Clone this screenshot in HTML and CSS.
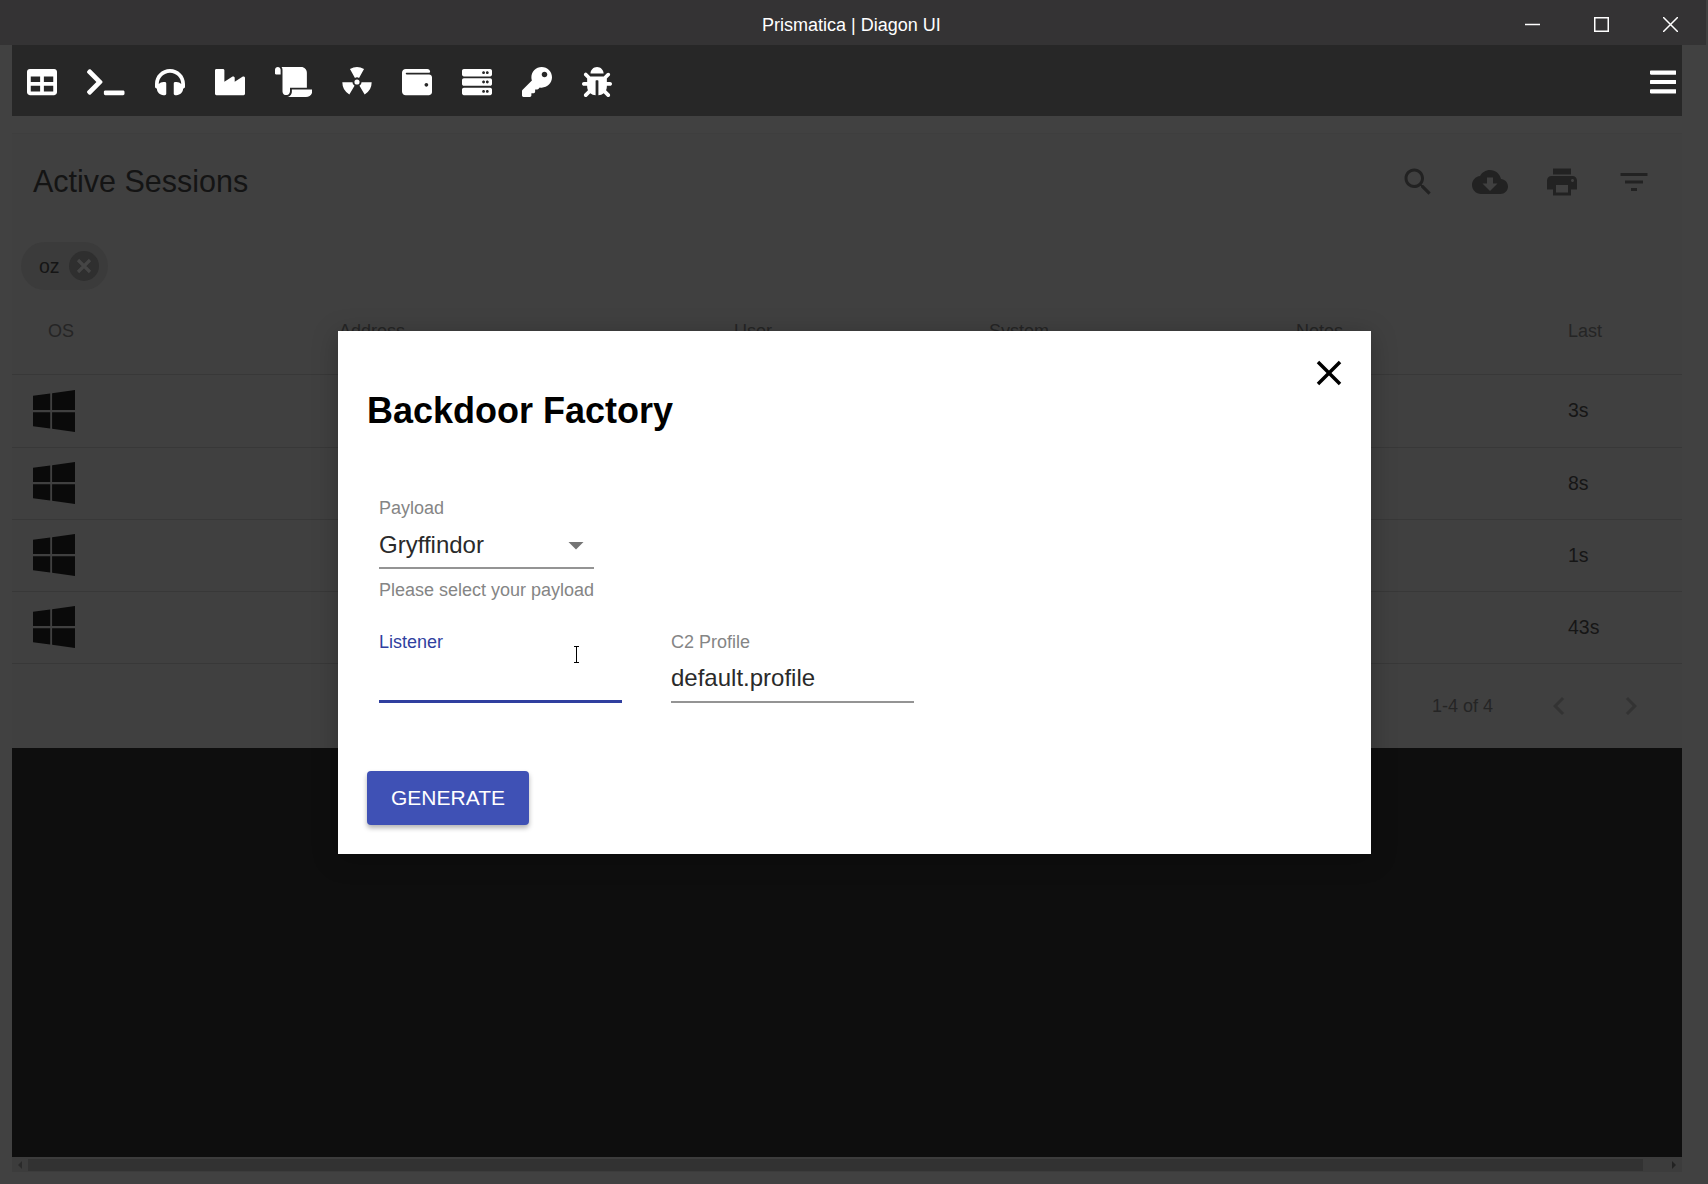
FILE: index.html
```html
<!DOCTYPE html>
<html lang="en">
<head>
<meta charset="utf-8">
<title>Prismatica | Diagon UI</title>
<link rel="stylesheet" href="styles.css">
</head>
<body>
<header class="titlebar">
  <div class="app-title">Prismatica | Diagon UI</div>
  <div class="win-controls">
    <div class="win-btn"><svg class="win-ic" viewBox="0 0 15 15"><path d="M0 7.5H15" /></svg></div>
    <div class="win-btn"><svg class="win-ic" viewBox="0 0 15 15"><rect x="0.75" y="0.75" width="13.5" height="13.5" /></svg></div>
    <div class="win-btn"><svg class="win-ic" viewBox="0 0 15 15"><path d="M0 0L15 15M15 0L0 15" /></svg></div>
  </div>
</header>

<div class="shell">
  <nav class="toolbar">
    <svg class="tb-ic" viewBox="0 0 512 512"><path d="M464 32H48C21.49 32 0 53.49 0 80v352c0 26.51 21.49 48 48 48h416c26.51 0 48-21.49 48-48V80c0-26.51-21.49-48-48-48zM224 416H64v-96h160v96zm0-160H64v-96h160v96zm224 160H288v-96h160v96zm0-160H288v-96h160v96z"/></svg>
    <svg class="tb-ic wide" viewBox="0 0 640 512"><path d="M257.981 272.971L63.638 467.314c-9.373 9.373-24.569 9.373-33.941 0L7.029 444.647c-9.357-9.357-9.375-24.522-.04-33.901L161.011 256 6.99 101.255c-9.335-9.379-9.317-24.544.04-33.901l22.667-22.667c9.373-9.373 24.569-9.373 33.941 0L257.981 239.03c9.373 9.372 9.373 24.568 0 33.941zM640 456v-32c0-13.255-10.745-24-24-24H312c-13.255 0-24 10.745-24 24v32c0 13.255 10.745 24 24 24h304c13.255 0 24-10.745 24-24z"/></svg>
    <svg class="tb-ic" viewBox="0 0 512 512"><path d="M256 32C114.52 32 0 146.496 0 288v48a32 32 0 0 0 17.689 28.622l14.383 7.191C34.083 431.903 83.421 480 144 480h24c13.255 0 24-10.745 24-24V280c0-13.255-10.745-24-24-24h-24c-31.342 0-59.671 12.879-80 33.627V288c0-105.869 86.131-192 192-192s192 86.131 192 192v1.627C427.671 268.879 399.342 256 368 256h-24c-13.255 0-24 10.745-24 24v176c0 13.255 10.745 24 24 24h24c60.579 0 109.917-48.098 111.928-108.187l14.382-7.191A32 32 0 0 0 512 336v-48c0-141.479-114.496-256-256-256z"/></svg>
    <svg class="tb-ic" viewBox="0 0 512 512"><path d="M475.115 163.781L336 252.309v-68.28c0-18.916-20.931-30.399-36.885-20.248L160 252.309V56c0-13.255-10.745-24-24-24H24C10.745 32 0 42.745 0 56v400c0 13.255 10.745 24 24 24h464c13.255 0 24-10.745 24-24V184.029c0-18.917-20.931-30.399-36.885-20.248z"/></svg>
    <svg class="tb-ic wide" viewBox="0 0 640 512"><path d="M48 0C21.53 0 0 21.53 0 48v64c0 8.84 7.16 16 16 16h80V48C96 21.53 74.47 0 48 0zm208 412.57V352h288V96c0-52.94-43.06-96-96-96H111.59C121.74 13.41 128 29.92 128 48v368c0 38.87 34.65 69.65 74.75 63.12C234.22 474 256 444.46 256 412.57zM288 384v32c0 52.94-43.06 96-96 96h336c61.86 0 112-50.14 112-112 0-8.84-7.16-16-16-16H288z"/></svg>
    <svg class="tb-ic" viewBox="0 0 512 512">
      <circle cx="256" cy="256" r="44"/>
      <path d="M136 36A240 240 0 0 1 376 36L291 187A70 70 0 0 0 221 187Z"/>
      <path d="M136 36A240 240 0 0 1 376 36L291 187A70 70 0 0 0 221 187Z" transform="rotate(120 256 256)"/>
      <path d="M136 36A240 240 0 0 1 376 36L291 187A70 70 0 0 0 221 187Z" transform="rotate(240 256 256)"/>
    </svg>
    <svg class="tb-ic" viewBox="0 0 512 512"><path d="M461.2 128H80c-8.84 0-16-7.16-16-16s7.16-16 16-16h384c8.84 0 16-7.16 16-16 0-26.51-21.49-48-48-48H64C28.65 32 0 60.65 0 96v320c0 35.35 28.65 64 64 64h397.2c28.02 0 50.8-21.53 50.8-48V176c0-26.47-22.78-48-50.8-48zM416 336c-17.67 0-32-14.33-32-32s14.33-32 32-32 32 14.33 32 32-14.33 32-32 32z"/></svg>
    <svg class="tb-ic" viewBox="0 0 512 512"><path d="M480 160H32c-17.673 0-32-14.327-32-32V64c0-17.673 14.327-32 32-32h448c17.673 0 32 14.327 32 32v64c0 17.673-14.327 32-32 32zm-48-88c-13.255 0-24 10.745-24 24s10.745 24 24 24 24-10.745 24-24-10.745-24-24-24zm-64 0c-13.255 0-24 10.745-24 24s10.745 24 24 24 24-10.745 24-24-10.745-24-24-24zm112 248H32c-17.673 0-32-14.327-32-32v-64c0-17.673 14.327-32 32-32h448c17.673 0 32 14.327 32 32v64c0 17.673-14.327 32-32 32zm-48-88c-13.255 0-24 10.745-24 24s10.745 24 24 24 24-10.745 24-24-10.745-24-24-24zm-64 0c-13.255 0-24 10.745-24 24s10.745 24 24 24 24-10.745 24-24-10.745-24-24-24zm112 248H32c-17.673 0-32-14.327-32-32v-64c0-17.673 14.327-32 32-32h448c17.673 0 32 14.327 32 32v64c0 17.673-14.327 32-32 32zm-48-88c-13.255 0-24 10.745-24 24s10.745 24 24 24 24-10.745 24-24-10.745-24-24-24zm-64 0c-13.255 0-24 10.745-24 24s10.745 24 24 24 24-10.745 24-24-10.745-24-24-24z"/></svg>
    <svg class="tb-ic" viewBox="0 0 512 512"><path d="M512 176.001C512 273.203 433.202 352 336 352c-11.22 0-22.19-1.062-32.827-3.069l-24.012 27.014A23.999 23.999 0 0 1 261.223 384H224v40c0 13.255-10.745 24-24 24h-40v40c0 13.255-10.745 24-24 24H24c-13.255 0-24-10.745-24-24v-78.059c0-6.365 2.529-12.47 7.029-16.971l161.802-161.802C163.108 213.814 160 195.271 160 176 160 78.798 238.797.001 335.999 0 433.488-.001 512 78.511 512 176.001zM336 128c0 26.51 21.49 48 48 48s48-21.49 48-48-21.49-48-48-48-48 21.49-48 48z"/></svg>
    <svg class="tb-ic" viewBox="0 0 512 512"><path d="M511.988 288.9c-.478 17.43-15.217 31.1-32.653 31.1H424v16c0 21.864-4.882 42.584-13.6 61.145l60.228 60.228c12.496 12.497 12.496 32.758 0 45.255-12.498 12.497-32.759 12.496-45.256 0l-54.736-54.736C345.886 467.965 314.351 480 280 480V236c0-6.627-5.373-12-12-12h-24c-6.627 0-12 5.373-12 12v244c-34.351 0-65.886-12.035-90.636-32.108l-54.736 54.736c-12.498 12.497-32.759 12.496-45.256 0-12.496-12.497-12.496-32.758 0-45.255l60.228-60.228C92.882 378.584 88 357.864 88 336v-16H32.666C15.23 320 .491 306.33.013 288.9-.484 270.816 14.028 256 32 256h56v-58.745l-46.628-46.628c-12.496-12.497-12.496-32.758 0-45.255 12.498-12.497 32.758-12.497 45.256 0L141.255 160h229.489l54.627-54.627c12.498-12.497 32.758-12.497 45.256 0 12.496 12.497 12.496 32.758 0 45.255L424 197.255V256h56c17.972 0 32.484 14.816 31.988 32.9zM257 0c-61.856 0-112 50.144-112 112h224C369 50.144 318.856 0 257 0z"/></svg>
    <svg class="tb-ic bars" viewBox="0 0 448 512"><path d="M16 132h416c8.837 0 16-7.163 16-16V76c0-8.837-7.163-16-16-16H16C7.163 60 0 67.163 0 76v40c0 8.837 7.163 16 16 16zm0 160h416c8.837 0 16-7.163 16-16v-40c0-8.837-7.163-16-16-16H16c-8.837 0-16 7.163-16 16v40c0 8.837 7.163 16 16 16zm0 160h416c8.837 0 16-7.163 16-16v-40c0-8.837-7.163-16-16-16H16c-8.837 0-16 7.163-16 16v40c0 8.837 7.163 16 16 16z"/></svg>
  </nav>

  <main class="card">
    <div class="card-head">
      <h1 class="card-title">Active Sessions</h1>
      <div class="actions">
        <div class="act"><svg class="mi" viewBox="0 0 24 24"><path d="M15.5 14h-.79l-.28-.27C15.41 12.59 16 11.11 16 9.5 16 5.91 13.09 3 9.5 3S3 5.91 3 9.5 5.91 16 9.5 16c1.61 0 3.09-.59 4.23-1.57l.27.28v.79l5 4.99L20.49 19l-4.99-5zm-6 0C7.01 14 5 11.99 5 9.5S7.01 5 9.5 5 14 7.01 14 9.5 11.99 14 9.5 14z"/></svg></div>
        <div class="act"><svg class="mi" viewBox="0 0 24 24"><path d="M19.35 10.04C18.67 6.59 15.64 4 12 4 9.11 4 6.6 5.64 5.35 8.04 2.34 8.36 0 10.91 0 14c0 3.31 2.69 6 6 6h13c2.76 0 5-2.24 5-5 0-2.64-2.05-4.78-4.65-4.96zM17 13l-5 5-5-5h3V9h4v4h3z"/></svg></div>
        <div class="act"><svg class="mi" viewBox="0 0 24 24"><path d="M19 8H5c-1.66 0-3 1.34-3 3v6h4v4h12v-4h4v-6c0-1.66-1.34-3-3-3zm-3 11H8v-5h8v5zm3-7c-.55 0-1-.45-1-1s.45-1 1-1 1 .45 1 1-.45 1-1 1zm-1-9H6v4h12V3z"/></svg></div>
        <div class="act"><svg class="mi" viewBox="0 0 24 24"><path d="M10 18h4v-2h-4v2zM3 6v2h18V6H3zm3 7h12v-2H6v2z"/></svg></div>
      </div>
    </div>

    <div class="chips">
      <div class="chip">
        <span class="chip-label">oz</span>
        <svg class="chip-del" viewBox="0 0 30 30"><circle cx="15" cy="15" r="15"/><path d="M9 9L21 21M21 9L9 21"/></svg>
      </div>
    </div>

    <div class="tr thead">
      <div class="th">OS</div><div class="th">Address</div><div class="th">User</div><div class="th">System</div><div class="th">Notes</div><div class="th">Last</div>
    </div>
    <div class="tr row first">
      <svg class="os" viewBox="0 32 448 448"><path d="M0 93.7l183.6-25.3v177.4H0V93.7zm0 324.6l183.6 25.3V268.4H0v149.9zm203.8 28L448 480V268.4H203.8v177.9zm0-380.6v180.1H448V32L203.8 65.7z"/></svg>
      <div class="td-last">3s</div>
    </div>
    <div class="tr row">
      <svg class="os" viewBox="0 32 448 448"><path d="M0 93.7l183.6-25.3v177.4H0V93.7zm0 324.6l183.6 25.3V268.4H0v149.9zm203.8 28L448 480V268.4H203.8v177.9zm0-380.6v180.1H448V32L203.8 65.7z"/></svg>
      <div class="td-last">8s</div>
    </div>
    <div class="tr row">
      <svg class="os" viewBox="0 32 448 448"><path d="M0 93.7l183.6-25.3v177.4H0V93.7zm0 324.6l183.6 25.3V268.4H0v149.9zm203.8 28L448 480V268.4H203.8v177.9zm0-380.6v180.1H448V32L203.8 65.7z"/></svg>
      <div class="td-last">1s</div>
    </div>
    <div class="tr row">
      <svg class="os" viewBox="0 32 448 448"><path d="M0 93.7l183.6-25.3v177.4H0V93.7zm0 324.6l183.6 25.3V268.4H0v149.9zm203.8 28L448 480V268.4H203.8v177.9zm0-380.6v180.1H448V32L203.8 65.7z"/></svg>
      <div class="td-last">43s</div>
    </div>

    <div class="pager">
      <svg class="mi rows-arrow" viewBox="0 0 24 24"><path d="M7 10l5 5 5-5z"/></svg>
      <span class="pager-text">1-4 of 4</span>
      <svg class="mi pg" viewBox="0 0 24 24"><path d="M15.41 7.41L14 6l-6 6 6 6 1.41-1.41L10.83 12z"/></svg>
      <svg class="mi pg" viewBox="0 0 24 24"><path d="M10 6L8.59 7.41 13.17 12l-4.58 4.59L10 18l6-6z"/></svg>
    </div>
  </main>

  <section class="terminal"></section>

  <div class="hscroll">
    <span class="arrow-l"></span>
    <div class="thumb"></div>
    <span class="arrow-r"></span>
  </div>
</div>

<div class="modal">
  <svg class="modal-close" viewBox="0 0 24 24"><path d="M19 6.41L17.59 5 12 10.59 6.41 5 5 6.41 10.59 12 5 17.59 6.41 19 12 13.41 17.59 19 19 17.59 13.41 12z"/></svg>
  <h2 class="modal-title">Backdoor Factory</h2>
  <div class="form">
    <div class="field select-field">
      <label class="label">Payload</label>
      <div class="value select-value">Gryffindor
        <svg class="mi drop" viewBox="0 0 24 24"><path d="M7 10l5 5 5-5z"/></svg>
      </div>
      <p class="helper">Please select your payload</p>
    </div>
    <div class="form-row">
      <div class="field text-field focused">
        <label class="label">Listener</label>
        <div class="value"></div>
      </div>
      <div class="field text-field">
        <label class="label">C2 Profile</label>
        <div class="value">default.profile</div>
      </div>
    </div>
  </div>
  <button class="generate">GENERATE</button>
  <svg class="ibeam" viewBox="0 0 7 17"><path d="M1 .5H6M3.5.5V16.500M1 16.500H6"/></svg>
</div>
</body>
</html>
```

FILE: styles.css
```css
* { box-sizing: border-box; }
html, body { margin: 0; height: 1184px; overflow: hidden; }
body {
  background: #414141;
  font-family: "Liberation Sans", Arial, sans-serif;
  position: relative;
}

/* window chrome */
.titlebar {
  display: flex;
  width: 1706px;
  height: 45px;
  background: #343334;
  color: #fff;
}
.app-title {
  padding-left: 762px;
  font-size: 18px;
  line-height: 51px;
  height: 45px;
  flex: 1;
}
.win-controls { display: flex; margin-right: 1px; }
.win-btn {
  width: 69px;
  display: flex;
  align-items: center;
  justify-content: center;
}
.win-ic { width: 15px; height: 15px; fill: none; stroke: #fff; stroke-width: 1.5; margin-top: 4px; }

/* app shell */
.shell { padding: 0 26px 0 12px; }
.toolbar {
  height: 71px;
  padding: 22px 6px 0 15px;
  background: #272727;
  display: flex;
  align-items: flex-start;
  gap: 30px;
}
.tb-ic { width: 30px; height: 30px; fill: #fff; flex: none; }
.tb-ic.wide { width: 37.5px; }
.tb-ic.bars { width: 26.25px; margin-left: auto; }

/* sessions card */
.card {
  margin-top: 17px;
  height: 615px;
  background: #404040;
  border-top: 1px solid #3e3e3e;
}
.card-head {
  height: 97px;
  padding: 0 12px 2px 21px;
  display: flex;
  align-items: center;
  justify-content: space-between;
}
.card-title { margin: 0; font-size: 30.5px; font-weight: 400; color: #141414; }
.actions { display: flex; }
.act { width: 72px; display: flex; justify-content: center; }
.mi { width: 36px; height: 36px; fill: #222; display: block; }

.chips { margin-top: 11px; padding-left: 9px; }
.chip {
  width: 87px;
  height: 48px;
  border-radius: 24px;
  background: #3b3b3b;
  display: flex;
  align-items: center;
  padding-left: 18px;
}
.chip-label { font-size: 19.5px; color: #151515; width: 30px; }
.chip-del { width: 30px; height: 30px; margin-left: 0; }
.chip-del circle { fill: #2f2f2f; }
.chip-del path { stroke: #454545; stroke-width: 3.2; fill: none; }

.tr {
  display: grid;
  grid-template-columns: 327px 395px 255px 307px 272px 114px;
  border-bottom: 1px solid #383838;
  align-items: center;
}
.thead { height: 85px; padding-bottom: 1px; }
.th { font-size: 18px; color: #252525; }
.th:first-child { padding-left: 36px; }
.row { height: 72px; }
.row.first { height: 73px; }
.os { width: 42px; height: 42px; fill: #0a0a0a; margin-left: 21px; margin-top: -1px; }
.first .os { margin-top: 0; }
.td-last { grid-column: 6; font-size: 19.5px; color: #161616; }
.first .td-last { margin-top: -2px; }

.pager {
  height: 84px;
  display: flex;
  align-items: center;
  justify-content: flex-end;
  padding-right: 33px;
}
.rows-arrow { fill: #2f2f2f; margin-right: 51px; }
.pager-text { font-size: 18px; color: #252525; margin-right: 48px; }
.pg { fill: #333; }
.pg + .pg { margin-left: 36px; }

.terminal { height: 409px; background: #0e0e0e; }

.hscroll {
  height: 15px;
  background: #3c3c3c;
  display: flex;
  align-items: center;
  padding: 0 6px;
}
.thumb { height: 12px; width: 1615px; background: #323232; margin: 0 29px 0 6px; }
.arrow-l, .arrow-r { width: 0; height: 0; border-top: 4px solid transparent; border-bottom: 4px solid transparent; flex: none; }
.arrow-l { border-right: 4px solid #2a2a2a; }
.arrow-r { border-left: 4px solid #222; }

/* dialog */
.modal {
  position: absolute;
  left: 338px;
  top: 331px;
  width: 1033px;
  height: 523px;
  background: #fff;
  box-shadow: 0 4px 24px rgba(0, 0, 0, .25);
  padding: 58px 0 0 29px;
}
.modal-close { position: absolute; left: 970px; top: 21px; width: 42px; height: 42px; fill: #000; }
.modal-title { margin: 0; font-size: 36px; font-weight: 700; line-height: 44px; color: #000; }
.form { margin: 65px 0 0 12px; }
.field { display: block; }
.label { display: block; font-size: 18px; line-height: 20px; color: #858585; }
.value {
  position: relative;
  font-size: 24px;
  line-height: 30px;
  color: #2a2a2a;
  border-bottom: 2px solid #949494;
}
.select-field { width: 215px; }
.select-value { margin-top: 12px; height: 39px; }
.drop { position: absolute; right: 0; top: -3px; fill: #757575; }
.helper { margin: 11px 0 0; font-size: 18px; line-height: 21px; color: #858585; white-space: nowrap; }
.form-row { display: flex; gap: 49px; margin-top: 31px; }
.text-field { width: 243px; }
.text-field .value { margin-top: 10px; height: 41px; line-height: 32px; }
.focused .label { color: #303f9f; }
.focused .value { border-bottom: 3px solid #303f9f; }

.generate {
  display: block;
  margin-top: 68px;
  width: 162px;
  height: 54px;
  padding: 0;
  border: 0;
  border-radius: 4px;
  background: #3f51b5;
  color: #fff;
  font: 400 21px "Liberation Sans", Arial, sans-serif;
  box-shadow: 0 3px 5px rgba(0, 0, 0, .3);
}
.ibeam { position: absolute; left: 235px; top: 315px; width: 7px; height: 17px; fill: none; stroke: #000; stroke-width: 1; }
```
